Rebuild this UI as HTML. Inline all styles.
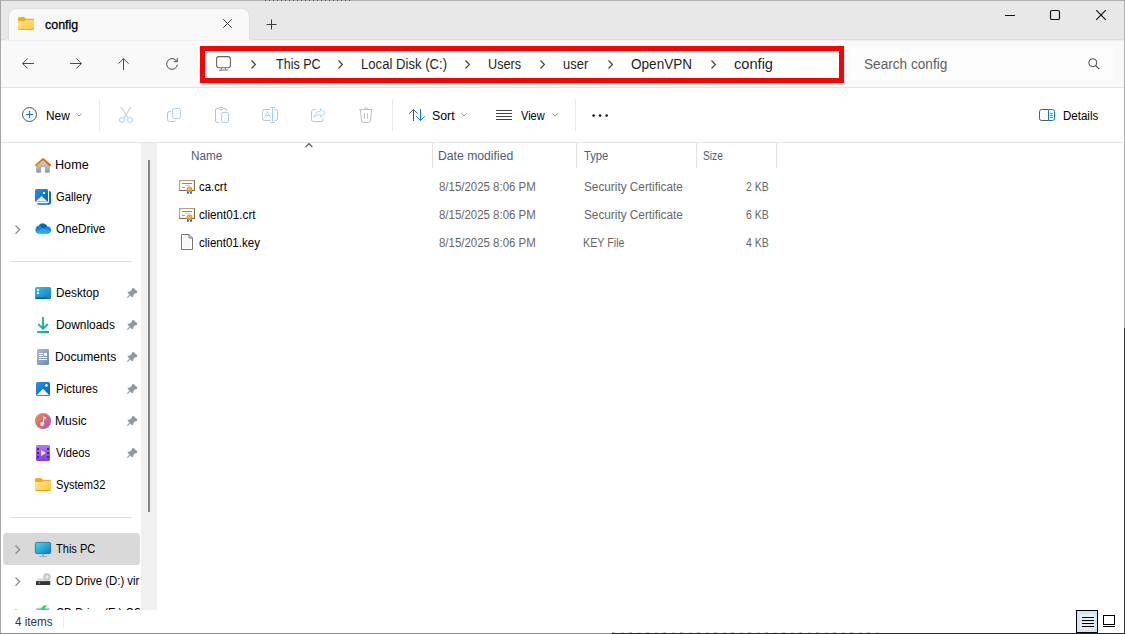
<!DOCTYPE html>
<html><head><meta charset="utf-8">
<style>
*{box-sizing:border-box;margin:0;padding:0}
html,body{width:1125px;height:634px;overflow:hidden;background:#fff;font-family:"Liberation Sans",sans-serif;font-size:12px;color:#000}
.abs{position:absolute}
#win{position:absolute;left:0;top:0;width:1125px;height:634px;background:#fff;overflow:hidden}
#titlebar{left:0;top:0;width:1125px;height:40px;background:#e8e8e8;border-bottom:1px solid #dcdcdc}
#tab{left:8px;top:8px;width:242px;height:33px;background:#f9f9f9;border-radius:8px 8px 0 0;border:1px solid #dfdfdf;border-bottom:none}
#navbar{left:0;top:40px;width:1125px;height:48px;background:#f9f9f9;border-top:1px solid #f1f1f1;border-bottom:1px solid #e3e3e3}
#toolbar{left:0;top:88px;width:1125px;height:55px;background:#fff;border-bottom:1px solid #e3e3e3}
#addr{left:200px;top:46px;width:644px;height:37px;border:5px solid #fe0000;background:#fff;outline:1px solid #fcfefe}
#search{left:850px;top:48px;width:263px;height:32px;background:#fdfdfd;border-radius:4px}
.t{position:absolute;white-space:nowrap;line-height:16px}
.a{font-size:14px;color:#1f1f1f}
.g{color:#676767}
.h{color:#4a5e78}
#sbtrack{left:141px;top:143px;width:16px;height:467px;background:#f0f0f0}
#sbthumb{left:148px;top:160px;width:2px;height:352px;background:#858585}
#selrow{left:3px;top:533px;width:137px;height:32px;background:#d9d9d9;border-radius:4px}
.sep{position:absolute;left:11px;width:121px;height:1px;background:#dedede}
.hsep{position:absolute;top:143px;width:1px;height:25px;background:#e2e2e2}
.tsep{position:absolute;top:99px;width:1px;height:32px;background:#eaeaea}
svg{position:absolute;overflow:visible}
</style></head><body>
<div id="win">
<div id="titlebar" class="abs"></div>
<div id="tab" class="abs"></div>
<!-- concave corners of tab -->
<svg style="left:250px;top:36px" width="4" height="4"><path d="M0 0 A3.5 3.5 0 0 0 3.5 3.5 L3.5 4 L0 4 Z" fill="#f9f9f9"/><path d="M-0.5 0 A3.5 3.5 0 0 0 3.5 3.5" fill="none" stroke="#dcdcdc" stroke-width="1"/></svg>
<svg style="left:4px;top:36px" width="4" height="4"><path d="M4 0 A3.5 3.5 0 0 1 0.5 3.5 L0.5 4 L4 4 Z" fill="#f9f9f9"/><path d="M4.5 0 A3.5 3.5 0 0 1 0.5 3.5" fill="none" stroke="#dcdcdc" stroke-width="1"/></svg>
<div id="navbar" class="abs"></div>
<div id="toolbar" class="abs"></div>
<div id="addr" class="abs"></div>
<div id="search" class="abs"></div>
<div id="sbtrack" class="abs"></div>
<div id="sbthumb" class="abs"></div>
<div id="selrow" class="abs"></div>
<div class="sep" style="top:261px"></div>
<div class="sep" style="top:517px"></div>
<div class="hsep" style="left:432px"></div>
<div class="hsep" style="left:576px"></div>
<div class="hsep" style="left:696px"></div>
<div class="hsep" style="left:776px"></div>
<div class="tsep" style="left:99px"></div>
<div class="tsep" style="left:392px"></div>
<div class="tsep" style="left:575px"></div>
<div class="abs" style="left:63px;top:616px;width:1px;height:12px;background:#ececec"></div>

<!--ICONS1-->
<!-- tab folder -->
<svg style="left:18px;top:17px" width="16" height="13" viewBox="0 0 16 13">
<defs><linearGradient id="fg" x1="0" y1="0" x2="1" y2="1"><stop offset="0" stop-color="#ffe08c"/><stop offset="1" stop-color="#fdc93c"/></linearGradient></defs>
<path d="M0 1.5 A1.5 1.5 0 0 1 1.5 0 H5.6 C6.3 0 6.6 0.3 7 0.8 L7.8 1.8 H14.6 A1.4 1.4 0 0 1 16 3.2 V6 H0 Z" fill="#f3b108"/>
<path d="M0 4.2 H6.2 C6.8 4.2 7.1 4 7.5 3.6 L8 3 H14.8 A1.2 1.2 0 0 1 16 4.2 V11.6 A1.4 1.4 0 0 1 14.6 13 H1.4 A1.4 1.4 0 0 1 0 11.6 Z" fill="url(#fg)"/>
<path d="M0 11.2 V11.6 A1.4 1.4 0 0 0 1.4 13 H14.6 A1.4 1.4 0 0 0 16 11.6 V11.2 A1.2 1.2 0 0 1 14.8 12.2 H1.2 A1.2 1.2 0 0 1 0 11.2Z" fill="#e9a313"/>
</svg>
<!-- tab close -->
<svg style="left:223px;top:19px" width="9" height="9" viewBox="0 0 9 9"><path d="M0.3 0.3 L8.7 8.7 M8.7 0.3 L0.3 8.7" stroke="#3a3a3a" stroke-width="1" fill="none"/></svg>
<!-- plus -->
<svg style="left:266px;top:19px" width="11" height="11" viewBox="0 0 11 11"><path d="M5.5 0.5 V10.5 M0.5 5.5 H10.5" stroke="#3a3a3a" stroke-width="1" fill="none"/></svg>
<!-- min / max / close -->
<svg style="left:1005px;top:15px" width="10" height="1"><rect width="10" height="1" fill="#111"/></svg>
<svg style="left:1050px;top:10px" width="10" height="10" viewBox="0 0 10 10"><rect x="0.5" y="0.5" width="9" height="9" rx="1.6" fill="none" stroke="#111" stroke-width="1.15"/></svg>
<svg style="left:1096px;top:10px" width="10" height="10" viewBox="0 0 10 10"><path d="M0.2 0.2 L9.8 9.8 M9.8 0.2 L0.2 9.8" stroke="#111" stroke-width="1.15" fill="none"/></svg>
<!-- back / forward / up / refresh -->
<svg style="left:22px;top:58px" width="12" height="11" viewBox="0 0 12 11"><path d="M12 5.5 H0.8 M5.7 0.4 L0.6 5.5 L5.7 10.6" stroke="#4a4a4a" stroke-width="1" fill="none"/></svg>
<svg style="left:70px;top:58px" width="12" height="11" viewBox="0 0 12 11"><path d="M0 5.5 H11.2 M6.3 0.4 L11.4 5.5 L6.3 10.6" stroke="#4a4a4a" stroke-width="1" fill="none"/></svg>
<svg style="left:118px;top:58px" width="11" height="12" viewBox="0 0 11 12"><path d="M5.5 12 V0.8 M0.4 5.7 L5.5 0.6 L10.6 5.7" stroke="#4a4a4a" stroke-width="1" fill="none"/></svg>
<svg style="left:166px;top:57px" width="12" height="13" viewBox="0 0 12 13"><path d="M10.9 4.6 A5.4 5.4 0 1 0 11.4 7.6 M11.3 1.2 V4.7 H7.8" stroke="#4a4a4a" stroke-width="1" fill="none"/></svg>
<!-- PC icon in address bar -->
<svg style="left:215.5px;top:56px" width="15" height="15" viewBox="0 0 15 15"><rect x="0.6" y="0.6" width="13.8" height="11.2" rx="2.2" fill="none" stroke="#666" stroke-width="1.1"/><path d="M5.5 12 V13.8 M9.5 12 V13.8" stroke="#8a8a8a" stroke-width="1" fill="none"/><path d="M3 14.1 H12" stroke="#6e6e6e" stroke-width="1" fill="none"/></svg>
<!-- breadcrumb chevrons -->
<svg style="left:251px;top:60px" width="5" height="9" viewBox="0 0 5 9"><path d="M0.5 0.5 L4.4 4.5 L0.5 8.5" stroke="#404040" stroke-width="1.15" fill="none"/></svg>
<svg style="left:338px;top:60px" width="5" height="9" viewBox="0 0 5 9"><path d="M0.5 0.5 L4.4 4.5 L0.5 8.5" stroke="#404040" stroke-width="1.15" fill="none"/></svg>
<svg style="left:465px;top:60px" width="5" height="9" viewBox="0 0 5 9"><path d="M0.5 0.5 L4.4 4.5 L0.5 8.5" stroke="#404040" stroke-width="1.15" fill="none"/></svg>
<svg style="left:540px;top:60px" width="5" height="9" viewBox="0 0 5 9"><path d="M0.5 0.5 L4.4 4.5 L0.5 8.5" stroke="#404040" stroke-width="1.15" fill="none"/></svg>
<svg style="left:608px;top:60px" width="5" height="9" viewBox="0 0 5 9"><path d="M0.5 0.5 L4.4 4.5 L0.5 8.5" stroke="#404040" stroke-width="1.15" fill="none"/></svg>
<svg style="left:711px;top:60px" width="5" height="9" viewBox="0 0 5 9"><path d="M0.5 0.5 L4.4 4.5 L0.5 8.5" stroke="#404040" stroke-width="1.15" fill="none"/></svg>
<!-- search icon -->
<svg style="left:1088px;top:58px" width="12" height="12" viewBox="0 0 12 12"><circle cx="4.8" cy="4.7" r="4" fill="none" stroke="#444" stroke-width="1"/><path d="M7.7 7.6 L11.2 11.1" stroke="#444" stroke-width="1.1"/></svg>
<!--/ICONS1-->
<!--ICONS2-->
<svg width="0" height="0" style="left:0;top:0"><defs>
<linearGradient id="gFold" x1="0" y1="0" x2="1" y2="1"><stop offset="0" stop-color="#ffe394"/><stop offset="1" stop-color="#fcc738"/></linearGradient>
<linearGradient id="gBlue" x1="0" y1="0" x2="1" y2="1"><stop offset="0" stop-color="#2196e6"/><stop offset="1" stop-color="#0a5fb8"/></linearGradient>
<linearGradient id="gDesk" x1="0" y1="0" x2="1" y2="1"><stop offset="0" stop-color="#30c8de"/><stop offset="1" stop-color="#1374d0"/></linearGradient>
<linearGradient id="gPC" x1="0" y1="0" x2="1" y2="1"><stop offset="0" stop-color="#40e0ea"/><stop offset="1" stop-color="#1274c8"/></linearGradient>
<linearGradient id="gDoc" x1="0" y1="0" x2="1" y2="1"><stop offset="0" stop-color="#a9bcd6"/><stop offset="1" stop-color="#6c8cb4"/></linearGradient>
<linearGradient id="gDl" gradientUnits="userSpaceOnUse" x1="2" y1="2" x2="10" y2="15"><stop offset="0" stop-color="#27cc88"/><stop offset="1" stop-color="#0e9ca6"/></linearGradient>
<linearGradient id="gDl2" x1="0" y1="0" x2="1" y2="0"><stop offset="0" stop-color="#22c88a"/><stop offset="1" stop-color="#0e9ea4"/></linearGradient>
<linearGradient id="gMus" x1="0" y1="0.1" x2="1" y2="0.9"><stop offset="0" stop-color="#f48a48"/><stop offset="0.55" stop-color="#d4687c"/><stop offset="1" stop-color="#a858c0"/></linearGradient>
<linearGradient id="gVid" x1="0" y1="0" x2="0" y2="1"><stop offset="0" stop-color="#b577fa"/><stop offset="1" stop-color="#8338de"/></linearGradient>
<linearGradient id="gHome" x1="0" y1="0" x2="0" y2="1"><stop offset="0" stop-color="#d4d8dc"/><stop offset="1" stop-color="#989898"/></linearGradient>
<linearGradient id="gRoof" x1="0" y1="0" x2="1" y2="0"><stop offset="0" stop-color="#f58a0a"/><stop offset="1" stop-color="#e4580a"/></linearGradient>
</defs></svg>
<!-- New -->
<svg style="left:22px;top:107px" width="15" height="15" viewBox="0 0 15 15"><circle cx="7.5" cy="7.5" r="7" fill="#fafafa" stroke="#555" stroke-width="1"/><path d="M7.5 4 V11 M4 7.5 H11" stroke="#0a78d4" stroke-width="1.1"/></svg>
<svg style="left:76px;top:113px" width="6" height="4"><g><path d="M0.3 0.4 L3 3 L5.7 0.4" stroke="#8c8c8c" stroke-width="0.9" fill="none"/></g></svg>
<svg style="left:461px;top:113px" width="6" height="4"><g><path d="M0.3 0.4 L3 3 L5.7 0.4" stroke="#8c8c8c" stroke-width="0.9" fill="none"/></g></svg>
<svg style="left:552px;top:113px" width="6" height="4"><g><path d="M0.3 0.4 L3 3 L5.7 0.4" stroke="#8c8c8c" stroke-width="0.9" fill="none"/></g></svg>
<!-- cut -->
<svg style="left:119px;top:107px" width="14" height="16" viewBox="0 0 14 16"><path d="M2 0 L9.2 11 M11.8 0 L4.8 11" stroke="#c2c2c2" stroke-width="1" fill="none"/><circle cx="3" cy="13" r="2.5" fill="none" stroke="#a8d2f2" stroke-width="1"/><circle cx="11" cy="13" r="2.5" fill="none" stroke="#a8d2f2" stroke-width="1"/></svg>
<!-- copy -->
<svg style="left:167px;top:108px" width="14" height="14" viewBox="0 0 14 14"><path d="M4 3.5 H2.5 A2 2 0 0 0 0.5 5.5 V11.5 A2 2 0 0 0 2.5 13.5 H7 A2 2 0 0 0 8.8 12.3" stroke="#c2c2c2" stroke-width="1" fill="none"/><rect x="5.5" y="0.5" width="8" height="10" rx="2" fill="#fdfdfd" stroke="#a8d2f2" stroke-width="1"/></svg>
<!-- paste -->
<svg style="left:215px;top:107px" width="14" height="16" viewBox="0 0 14 16"><path d="M4.5 15.5 H2 A1.5 1.5 0 0 1 0.5 14 V3 A1.5 1.5 0 0 1 2 1.5 H10 A1.5 1.5 0 0 1 11.5 3 V4" stroke="#c2c2c2" stroke-width="1" fill="none"/><ellipse cx="6" cy="1.5" rx="2.6" ry="1.2" fill="#fff" stroke="#c2c2c2" stroke-width="1"/><rect x="6.5" y="5.5" width="7" height="10" rx="1.5" fill="#fdfdfd" stroke="#a8d2f2" stroke-width="1"/></svg>
<!-- rename -->
<svg style="left:262px;top:107px" width="16" height="16" viewBox="0 0 16 16"><path d="M8.6 2.5 H2.5 A2 2 0 0 0 0.5 4.5 V11.5 A2 2 0 0 0 2.5 13.5 H8.6 M12.2 2.5 H13.5 A2 2 0 0 1 15.5 4.5 V11.5 A2 2 0 0 1 13.5 13.5 H12.2" stroke="#c2c2c2" stroke-width="1" fill="none"/><path d="M8 0.5 H13 M8 15.5 H13 M10.5 0.5 V15.5" stroke="#a8d2f2" stroke-width="1" fill="none"/><path d="M2.6 10.8 L5.6 4.4 L8.6 10.8 M3.7 8.6 H7.5" stroke="#a8d2f2" stroke-width="0.9" fill="none"/></svg>
<!-- share -->
<svg style="left:311px;top:108px" width="15" height="14" viewBox="0 0 15 14"><path d="M5.5 1.7 H2.5 A2 2 0 0 0 0.5 3.7 V11.5 A2 2 0 0 0 2.5 13.5 H10 A2 2 0 0 0 12 11.5 V10.5" stroke="#c2c2c2" stroke-width="1" fill="none"/><path d="M9.6 0.6 L14.3 4.9 L9.6 9.2 V6.9 C6.5 6.6 4.5 7.6 3.2 9.3 C3.6 5.8 5.8 3.3 9.6 3 Z" fill="#fdfdfd" stroke="#a8d2f2" stroke-width="0.9" stroke-linejoin="round"/></svg>
<!-- delete -->
<svg style="left:359px;top:107px" width="14" height="16" viewBox="0 0 14 16"><path d="M0 2.5 H14 M5.2 2.5 A1.8 1.8 0 0 1 8.8 2.5 M1.3 2.5 L2.6 14 A1.6 1.6 0 0 0 4.2 15.5 H9.8 A1.6 1.6 0 0 0 11.4 14 L12.7 2.5 M5.5 6 V11.8 M8.5 6 V11.8" stroke="#c2c2c2" stroke-width="1" fill="none"/></svg>
<!-- sort -->
<svg style="left:409px;top:109px" width="17" height="12" viewBox="0 0 17 12"><path d="M4.5 12 V0.6 M0.2 4.7 L4.5 0.4 L8.8 4.7" stroke="#555" stroke-width="1" fill="none"/><path d="M11.5 0 V11.4 M7.2 7.3 L11.5 11.6 L15.8 7.3" stroke="#0a78d4" stroke-width="1" fill="none"/></svg>
<!-- view -->
<svg style="left:496px;top:110px" width="16" height="10" viewBox="0 0 16 10"><path d="M0 0.5 H16 M0 3.5 H16 M0 6.5 H16 M0 9.5 H16" stroke="#444" stroke-width="1"/></svg>
<!-- more -->
<svg style="left:592px;top:114px" width="16" height="3" viewBox="0 0 16 3"><circle cx="1.6" cy="1.6" r="1.3" fill="#1a1a1a"/><circle cx="8.1" cy="1.6" r="1.3" fill="#1a1a1a"/><circle cx="14.7" cy="1.6" r="1.3" fill="#1a1a1a"/></svg>
<!-- details -->
<svg style="left:1039px;top:109px" width="16" height="12" viewBox="0 0 16 12"><path d="M9.5 0.5 H2.5 A2 2 0 0 0 0.5 2.5 V9.5 A2 2 0 0 0 2.5 11.5 H9.5" stroke="#5a5a5a" stroke-width="1" fill="#fafafa"/><path d="M9.5 0.5 H13.5 A2 2 0 0 1 15.5 2.5 V9.5 A2 2 0 0 1 13.5 11.5 H9.5 Z" stroke="#0a78d4" stroke-width="1" fill="#fff"/><path d="M11.2 4.4 H13.8 M11.2 6.4 H13.8 M11.2 8.4 H13.8" stroke="#0a78d4" stroke-width="0.9"/></svg>
<!-- column sort chevron -->
<svg style="left:304.5px;top:142.6px" width="8" height="5" viewBox="0 0 8 5"><path d="M0.6 4.1 L4 0.6 L7.4 4.1" stroke="#4a4a4a" stroke-width="1.1" fill="none"/></svg>

<!-- NAV PANE ICONS -->
<!-- home -->
<svg style="left:35px;top:158px" width="16" height="15" viewBox="0 0 16 15"><path d="M1.2 7 L8 1.3 L14.8 7 V13.5 A1.2 1.2 0 0 1 13.6 14.7 H10 V9.3 H6 V14.7 H2.4 A1.2 1.2 0 0 1 1.2 13.5Z" fill="url(#gHome)"/><path d="M0.9 7.2 L8 1 L15.1 7.2" stroke="url(#gRoof)" stroke-width="2" fill="none" stroke-linecap="round" stroke-linejoin="round"/></svg>
<!-- gallery -->
<svg style="left:35px;top:189px" width="16" height="16" viewBox="0 0 16 16"><path d="M14 2 A1.8 1.8 0 0 1 16 3.8 V13.6 A2.2 2.2 0 0 1 13.8 15.8 H3.6 A1.8 1.8 0 0 1 2 14.2 H12.6 A1.4 1.4 0 0 0 14 12.8 Z" fill="#0f6cc4"/><rect x="0" y="0" width="13" height="12.8" rx="1.4" fill="url(#gBlue)"/><path d="M0.6 12.6 L6.5 7 L12.4 12.6 Z" fill="#e4f1fc"/><rect x="7.9" y="3" width="2.1" height="2" fill="#fff"/></svg>
<!-- onedrive -->
<svg style="left:35px;top:223px" width="16" height="11" viewBox="0 0 16 11"><path d="M4.2 10.6 A4 4 0 0 1 3.6 2.7 A4.8 4.8 0 0 1 12.3 3.6 A3.5 3.5 0 0 1 12.6 10.6 Z" fill="#1285dc"/><path d="M4.4 2.6 A4.8 4.8 0 0 1 12.3 3.6 L8.6 5.4 Z" fill="#0562b4"/><path d="M0.8 8.6 L8.6 5.2 L15.6 8.4 A3.4 3.4 0 0 1 12.6 10.6 H4.2 A4 4 0 0 1 0.8 8.6Z" fill="#2aa6ea"/></svg>
<svg style="left:15px;top:225px" width="6" height="9"><g><path d="M0.5 0.5 L4.6 4.6 L0.5 8.7" stroke="#8a8a8a" stroke-width="1.3" fill="none"/></g></svg>
<!-- desktop -->
<svg style="left:35px;top:287px" width="16" height="12" viewBox="0 0 16 12"><rect width="16" height="12" rx="1.6" fill="url(#gDesk)"/><path d="M0 10.6 H11.2 V12 H1.6 A1.6 1.6 0 0 1 0 10.6Z" fill="#0c569c"/><rect x="12" y="11" width="1" height="1" fill="#0c569c"/><rect x="14" y="11" width="1" height="1" fill="#0c569c"/><rect x="2" y="2.1" width="2" height="1.9" fill="#fff"/><rect x="2" y="5.2" width="2" height="1.9" fill="#fff"/></svg>
<!-- downloads -->
<svg style="left:37px;top:317px" width="12" height="16" viewBox="0 0 12 16"><path d="M6 0.8 V11.4 M1.8 7.6 L6 11.8 L10.2 7.6" stroke="url(#gDl)" stroke-width="2" fill="none" stroke-linecap="round" stroke-linejoin="round"/><rect x="0" y="14" width="12" height="2" fill="url(#gDl2)"/></svg>
<!-- documents -->
<svg style="left:37px;top:349px" width="12" height="16" viewBox="0 0 12 16"><rect width="12" height="16" rx="1.3" fill="url(#gDoc)"/><rect x="2" y="4" width="4" height="1" fill="#fff"/><rect x="2" y="6" width="4" height="1" fill="#fff"/><rect x="7" y="4" width="3" height="2.8" fill="#fff"/><rect x="2" y="8" width="8" height="1" fill="#fff"/><rect x="2" y="10" width="8" height="1" fill="#fff"/></svg>
<!-- pictures -->
<svg style="left:36px;top:382px" width="14" height="14" viewBox="0 0 14 14"><rect width="14" height="14" rx="1.6" fill="url(#gBlue)"/><path d="M1.2 12.9 L7 7 L12.8 12.9 Z" fill="#f1f7fd" stroke="#fff" stroke-width="0.5" stroke-linejoin="round"/><circle cx="10.4" cy="3.4" r="1.3" fill="#fff"/></svg>
<!-- music -->
<svg style="left:35px;top:413px" width="16" height="16" viewBox="0 0 16 16"><circle cx="8" cy="8" r="8" fill="url(#gMus)"/><circle cx="7.1" cy="11" r="1.9" fill="#fff"/><path d="M8 3.3 L10.9 4.3 V6.6 L9 5.9 V11 H8 Z" fill="#fff"/></svg>
<!-- videos -->
<svg style="left:36px;top:445px" width="14" height="16" viewBox="0 0 14 16"><rect width="14" height="16" rx="1.4" fill="url(#gVid)"/><g fill="#472a7c"><rect x="1" y="3" width="2" height="2"/><rect x="1" y="7" width="2" height="2"/><rect x="1" y="11" width="2" height="2"/><rect x="11" y="3" width="2" height="2"/><rect x="11" y="7" width="2" height="2"/><rect x="11" y="11" width="2" height="2"/></g><path d="M5 5 L9.8 8 L5 11 Z" fill="#f3f0f6"/></svg>
<!-- System32 folder -->
<svg style="left:35px;top:478px" width="16" height="13"><g><path d="M0 1.5 A1.5 1.5 0 0 1 1.5 0 H5.8 C6.5 0 6.8 0.3 7.2 0.8 L8 1.9 H14.6 A1.4 1.4 0 0 1 16 3.3 V6 H0 Z" fill="#f2b00c"/>
<path d="M0 4 H6.4 C7 4 7.3 3.8 7.7 3.4 L8.2 2.9 H14.8 A1.2 1.2 0 0 1 16 4.1 V11.6 A1.4 1.4 0 0 1 14.6 13 H1.4 A1.4 1.4 0 0 1 0 11.6 Z" fill="url(#gFold)"/>
<path d="M0 11 V11.6 A1.4 1.4 0 0 0 1.4 13 H14.6 A1.4 1.4 0 0 0 16 11.6 V11 A1.2 1.2 0 0 1 14.8 12.1 H1.2 A1.2 1.2 0 0 1 0 11Z" fill="#e8a416"/></g></svg>
<!-- pins -->
<svg style="left:126.7px;top:288px" width="11" height="10"><g><path d="M12.0 0.2 L13.3 0 L17.0 3.6 L16.8 4.8 L14.5 5.6 L13.0 7.2 L12.8 9.0 L11.8 9.2 L10.1 7.5 L7.5 10.1 L6.6 9.2 L9.2 6.6 L7.3 4.7 L7.6 3.8 L9.5 3.6 L11.2 2.2 Z" fill="#8f99a1" transform="translate(-6.7,0)"/></g></svg>
<svg style="left:126.7px;top:320px" width="11" height="10"><g><path d="M12.0 0.2 L13.3 0 L17.0 3.6 L16.8 4.8 L14.5 5.6 L13.0 7.2 L12.8 9.0 L11.8 9.2 L10.1 7.5 L7.5 10.1 L6.6 9.2 L9.2 6.6 L7.3 4.7 L7.6 3.8 L9.5 3.6 L11.2 2.2 Z" fill="#8f99a1" transform="translate(-6.7,0)"/></g></svg>
<svg style="left:126.7px;top:352px" width="11" height="10"><g><path d="M12.0 0.2 L13.3 0 L17.0 3.6 L16.8 4.8 L14.5 5.6 L13.0 7.2 L12.8 9.0 L11.8 9.2 L10.1 7.5 L7.5 10.1 L6.6 9.2 L9.2 6.6 L7.3 4.7 L7.6 3.8 L9.5 3.6 L11.2 2.2 Z" fill="#8f99a1" transform="translate(-6.7,0)"/></g></svg>
<svg style="left:126.7px;top:384px" width="11" height="10"><g><path d="M12.0 0.2 L13.3 0 L17.0 3.6 L16.8 4.8 L14.5 5.6 L13.0 7.2 L12.8 9.0 L11.8 9.2 L10.1 7.5 L7.5 10.1 L6.6 9.2 L9.2 6.6 L7.3 4.7 L7.6 3.8 L9.5 3.6 L11.2 2.2 Z" fill="#8f99a1" transform="translate(-6.7,0)"/></g></svg>
<svg style="left:126.7px;top:416px" width="11" height="10"><g><path d="M12.0 0.2 L13.3 0 L17.0 3.6 L16.8 4.8 L14.5 5.6 L13.0 7.2 L12.8 9.0 L11.8 9.2 L10.1 7.5 L7.5 10.1 L6.6 9.2 L9.2 6.6 L7.3 4.7 L7.6 3.8 L9.5 3.6 L11.2 2.2 Z" fill="#8f99a1" transform="translate(-6.7,0)"/></g></svg>
<svg style="left:126.7px;top:448px" width="11" height="10"><g><path d="M12.0 0.2 L13.3 0 L17.0 3.6 L16.8 4.8 L14.5 5.6 L13.0 7.2 L12.8 9.0 L11.8 9.2 L10.1 7.5 L7.5 10.1 L6.6 9.2 L9.2 6.6 L7.3 4.7 L7.6 3.8 L9.5 3.6 L11.2 2.2 Z" fill="#8f99a1" transform="translate(-6.7,0)"/></g></svg>
<!-- This PC -->
<svg style="left:15px;top:545px" width="6" height="9"><g><path d="M0.5 0.5 L4.6 4.6 L0.5 8.7" stroke="#8a8a8a" stroke-width="1.3" fill="none"/></g></svg>
<svg style="left:35px;top:542px" width="16" height="15" viewBox="0 0 16 15"><rect x="0.4" y="0.4" width="15.2" height="11.2" rx="1.4" fill="url(#gPC)" stroke="#0f6c9c" stroke-width="0.8"/><rect x="7.2" y="12" width="1.6" height="2" fill="#8fa6bc"/><rect x="4.2" y="14" width="7.8" height="0.9" fill="#8fa6bc"/></svg>
<!-- CD drive -->
<svg style="left:15px;top:577px" width="6" height="9"><g><path d="M0.5 0.5 L4.6 4.6 L0.5 8.7" stroke="#8a8a8a" stroke-width="1.3" fill="none"/></g></svg>
<svg style="left:36px;top:573px" width="15" height="12" viewBox="0 0 15 12"><path d="M2 5.2 H12.6 L14 8 H0.2Z" fill="#dcdcdc"/><circle cx="11" cy="3.9" r="3.8" fill="#c9cdd0"/><circle cx="11" cy="3.9" r="1.5" fill="#e8eaec"/><circle cx="11" cy="3.9" r="0.6" fill="#fff"/><rect x="0" y="8" width="14.2" height="4" fill="#343434"/><rect x="0" y="8" width="14.2" height="0.8" fill="#555"/><circle cx="3.4" cy="9.9" r="0.8" fill="#3ee04a"/></svg>
<!-- partial row -->
<div class="abs" style="left:0;top:600px;width:141px;height:10px;overflow:hidden">
<svg style="left:36px;top:5px" width="15" height="12" viewBox="0 0 15 12"><rect x="0.3" y="3.6" width="13" height="1" fill="#3c78d0"/><path d="M5 5 C5 2 6.5 0.3 11.3 0.2 C9.8 1.6 9 2.8 9 5Z" fill="#22e060"/></svg>
<svg style="left:15px;top:8.6px" width="6" height="9"><g><path d="M0.5 0.5 L4.6 4.6 L0.5 8.7" stroke="#8a8a8a" stroke-width="1.3" fill="none"/></g></svg>
</div>

<!-- FILE ICONS -->
<svg style="left:179px;top:180px" width="16" height="14"><g>
<rect x="0.5" y="0.5" width="15" height="10" fill="#fff" stroke="#b39c7c" stroke-width="1"/>
<path d="M0.5 10.5 H15.5 V0.5" fill="none" stroke="#7a6244" stroke-width="1"/>
<rect x="1.3" y="1.3" width="13.4" height="8.4" fill="none" stroke="#f3ede2" stroke-width="0.7"/>
<rect x="3" y="3" width="10" height="1" fill="#7c7cd2"/><rect x="6" y="5" width="5" height="0.7" fill="#b4b4e4"/><rect x="3" y="6.9" width="3" height="1" fill="#8c8cd8"/>
<path d="M8 10.5 L8 14 L9 13.4 L9.9 14 V10.5Z" fill="#1a5ef0"/><path d="M11 10.5 L11 14 L12 13.4 L12.9 14 V10.5Z" fill="#1a5ef0"/>
<circle cx="10.5" cy="9.3" r="2.8" fill="#e9a208"/><circle cx="10.3" cy="9" r="1.2" fill="#f6c24a"/>
</g></svg>
<svg style="left:179px;top:208px" width="16" height="14"><g>
<rect x="0.5" y="0.5" width="15" height="10" fill="#fff" stroke="#b39c7c" stroke-width="1"/>
<path d="M0.5 10.5 H15.5 V0.5" fill="none" stroke="#7a6244" stroke-width="1"/>
<rect x="1.3" y="1.3" width="13.4" height="8.4" fill="none" stroke="#f3ede2" stroke-width="0.7"/>
<rect x="3" y="3" width="10" height="1" fill="#7c7cd2"/><rect x="6" y="5" width="5" height="0.7" fill="#b4b4e4"/><rect x="3" y="6.9" width="3" height="1" fill="#8c8cd8"/>
<path d="M8 10.5 L8 14 L9 13.4 L9.9 14 V10.5Z" fill="#1a5ef0"/><path d="M11 10.5 L11 14 L12 13.4 L12.9 14 V10.5Z" fill="#1a5ef0"/>
<circle cx="10.5" cy="9.3" r="2.8" fill="#e9a208"/><circle cx="10.3" cy="9" r="1.2" fill="#f6c24a"/>
</g></svg>
<svg style="left:181px;top:234px" width="12" height="16" viewBox="0 0 12 16"><path d="M0.5 0.5 H8 L11.5 4 V15.5 H0.5 Z" fill="#f8f8f8" stroke="#777" stroke-width="1" stroke-linejoin="round"/><path d="M1.5 1.5 H7.5 V4.5 H10.5 V14.5 H1.5Z" fill="none" stroke="#fff" stroke-width="1"/><path d="M8 0.5 V4 H11.5" fill="none" stroke="#777" stroke-width="1"/></svg>

<!-- STATUS BAR VIEW BUTTONS -->
<div class="abs" style="left:1076px;top:610px;width:22px;height:23px;border:1px solid #000;background:#cbe8f8"></div>
<div class="abs" style="left:1080px;top:614px;width:15px;height:16px;background:#e7eff3;border-radius:2px"></div>
<svg style="left:1082px;top:617px" width="12" height="10" viewBox="0 0 12 10"><path d="M0 0.5 H12 M0 3.5 H12 M0 6.5 H12 M0 9.5 H12" stroke="#000" stroke-width="1"/></svg>
<svg style="left:1103px;top:615px" width="12" height="12" viewBox="0 0 12 12"><rect x="0.5" y="0.5" width="11" height="9" fill="#fff" stroke="#000" stroke-width="1"/><path d="M0 11.5 H12" stroke="#000" stroke-width="1"/></svg>
<!--/ICONS2-->

<!-- text -->
<div class="t" id="t_tab" style="left:44.6px;top:17px;font-size:13px;color:#000;-webkit-text-stroke:0.3px #000;transform:scaleX(0.957);transform-origin:0 0">config</div>
<div class="t a" id="a1" style="left:275.6px;top:56px;transform:scaleX(0.896);transform-origin:0 0">This PC</div>
<div class="t a" id="a2" style="left:360.8px;top:56px;transform:scaleX(0.937);transform-origin:0 0">Local Disk (C:)</div>
<div class="t a" id="a3" style="left:488.3px;top:56px;transform:scaleX(0.906);transform-origin:0 0">Users</div>
<div class="t a" id="a4" style="left:563.4px;top:56px;transform:scaleX(0.926);transform-origin:0 0">user</div>
<div class="t a" id="a5" style="left:630.8px;top:56px;transform:scaleX(0.969);transform-origin:0 0">OpenVPN</div>
<div class="t a" id="a6" style="left:733.8px;top:56px;transform:scaleX(1.044);transform-origin:0 0">config</div>
<div class="t a" id="a7" style="left:863.6px;top:56px;color:#5f5f5f;transform:scaleX(0.973);transform-origin:0 0">Search config</div>

<div class="t" id="b1" style="left:45.6px;top:108px;transform:scaleX(0.988);transform-origin:0 0">New</div>
<div class="t" id="b2" style="left:432.4px;top:108px;transform:scaleX(1.029);transform-origin:0 0">Sort</div>
<div class="t" id="b3" style="left:520.6px;top:108px;transform:scaleX(0.915);transform-origin:0 0">View</div>
<div class="t" id="b4" style="left:1063.4px;top:108px;transform:scaleX(0.961);transform-origin:0 0">Details</div>

<div class="t" id="n1" style="left:55.3px;top:157px;transform:scaleX(1.052);transform-origin:0 0">Home</div>
<div class="t" id="n2" style="left:55.8px;top:189px;transform:scaleX(0.934);transform-origin:0 0">Gallery</div>
<div class="t" id="n3" style="left:55.8px;top:221px;transform:scaleX(0.974);transform-origin:0 0">OneDrive</div>
<div class="t" id="n4" style="left:55.8px;top:285px;transform:scaleX(0.979);transform-origin:0 0">Desktop</div>
<div class="t" id="n5" style="left:55.8px;top:317px;transform:scaleX(0.993);transform-origin:0 0">Downloads</div>
<div class="t" id="n6" style="left:55.3px;top:349px;transform:scaleX(1.008);transform-origin:0 0">Documents</div>
<div class="t" id="n7" style="left:55.8px;top:381px;transform:scaleX(0.965);transform-origin:0 0">Pictures</div>
<div class="t" id="n8" style="left:55.3px;top:413px;transform:scaleX(1.010);transform-origin:0 0">Music</div>
<div class="t" id="n9" style="left:56.3px;top:445px;transform:scaleX(0.932);transform-origin:0 0">Videos</div>
<div class="t" id="n10" style="left:55.8px;top:477px;transform:scaleX(0.926);transform-origin:0 0">System32</div>
<div class="t" id="n11" style="left:56.3px;top:541px;transform:scaleX(0.921);transform-origin:0 0">This PC</div>
<div class="t" id="n12" style="left:56.4px;top:573px;transform:scaleX(0.947);transform-origin:0 0">CD Drive (D:) vir</div>
<div class="abs" style="left:0;top:597px;width:140px;height:13px;overflow:hidden"><div class="t" id="n13" style="left:56.4px;top:8px;transform:scaleX(.93);transform-origin:0 0;width:90px;overflow:hidden">CD Drive (E:) CC</div></div>

<div class="t h" id="h1" style="left:191.2px;top:148px;transform:scaleX(0.981);transform-origin:0 0">Name</div>
<div class="t h" id="h2" style="left:438.4px;top:148px;transform:scaleX(1.016);transform-origin:0 0">Date modified</div>
<div class="t h" id="h3" style="left:583.6px;top:148px;transform:scaleX(0.935);transform-origin:0 0">Type</div>
<div class="t h" id="h4" style="left:702.7px;top:148px;transform:scaleX(0.848);transform-origin:0 0">Size</div>

<div class="t" id="f1" style="left:199.0px;top:179px;transform:scaleX(0.947);transform-origin:0 0">ca.crt</div>
<div class="t" id="f2" style="left:199.0px;top:207px;transform:scaleX(0.975);transform-origin:0 0">client01.crt</div>
<div class="t" id="f3" style="left:199.0px;top:235px;transform:scaleX(0.961);transform-origin:0 0">client01.key</div>
<div class="t g" id="d1" style="left:439.4px;top:179px;transform:scaleX(0.954);transform-origin:0 0">8/15/2025 8:06 PM</div>
<div class="t g" id="d2" style="left:439.4px;top:207px;transform:scaleX(0.954);transform-origin:0 0">8/15/2025 8:06 PM</div>
<div class="t g" id="d3" style="left:439.4px;top:235px;transform:scaleX(0.954);transform-origin:0 0">8/15/2025 8:06 PM</div>
<div class="t g" id="y1" style="left:583.6px;top:179px;transform:scaleX(0.982);transform-origin:0 0">Security Certificate</div>
<div class="t g" id="y2" style="left:583.6px;top:207px;transform:scaleX(0.982);transform-origin:0 0">Security Certificate</div>
<div class="t g" id="y3" style="left:582.8px;top:235px;transform:scaleX(0.893);transform-origin:0 0">KEY File</div>
<div class="t g" id="s1" style="left:746.0px;top:179px;transform:scaleX(0.873);transform-origin:0 0">2 KB</div>
<div class="t g" id="s2" style="left:746.0px;top:207px;transform:scaleX(0.873);transform-origin:0 0">6 KB</div>
<div class="t g" id="s3" style="left:746.0px;top:235px;transform:scaleX(0.873);transform-origin:0 0">4 KB</div>

<div class="t" id="st" style="left:15.4px;top:614px;color:#1e395b;transform:scaleX(0.969);transform-origin:0 0">4 items</div>

<!-- window borders -->
<div class="abs" style="left:0;top:0;width:1125px;height:1px;background:#b0b0b0"></div>
<div class="abs" style="left:0;top:0;width:1px;height:634px;background:#a6a6a6"></div>
<div class="abs" style="left:1124px;top:0;width:1px;height:328px;background:#b0b0b0"></div>
<div class="abs" style="left:1124px;top:328px;width:1px;height:306px;background:#333"></div>
<div class="abs" style="left:0;top:633px;width:612px;height:1px;background:#8c8c8c"></div>
<div class="abs" style="left:612px;top:633px;width:513px;height:1px;background:#2a2a2a"></div>
<div class="abs" style="left:612px;top:632px;width:270px;height:1px;background:repeating-linear-gradient(90deg,#c8c8c8 0 3px,#fff 3px 9px,#ddd 9px 12px,#fff 12px 17px)"></div>
<div class="abs" style="left:265px;top:0;width:88px;height:1px;background:repeating-linear-gradient(90deg,#555 0 1.5px,#b0b0b0 1.5px 4px)"></div>
</div>
</body></html>
